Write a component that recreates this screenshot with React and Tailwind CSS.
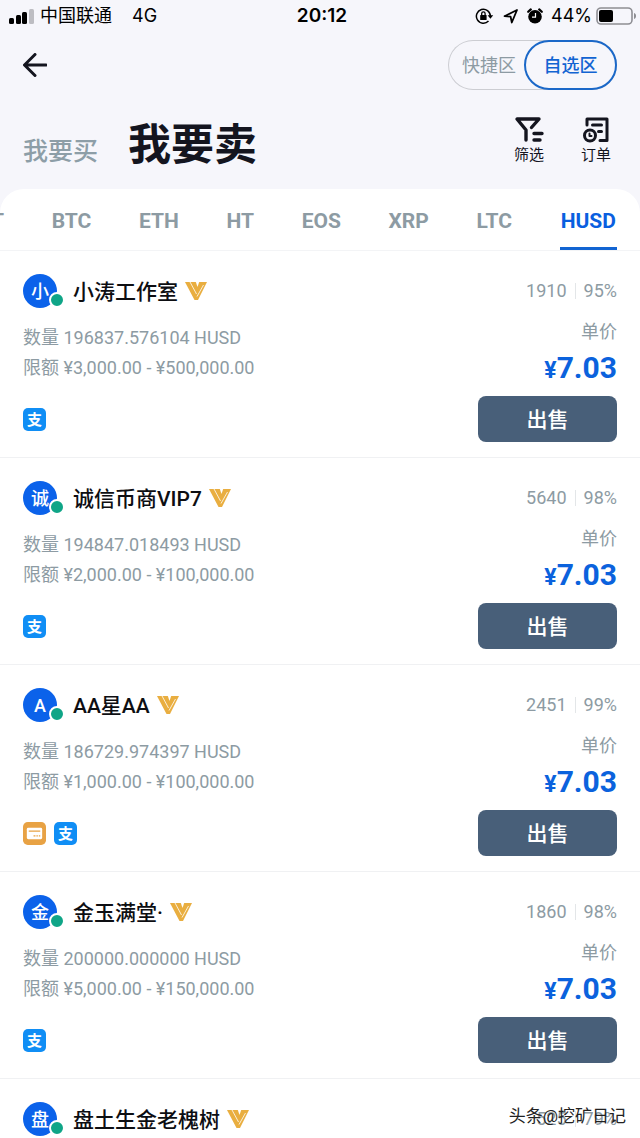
const FONT = "font-[Roboto,'Noto_Sans_CJK_SC',sans-serif]";

const coins = ["BTC", "ETH", "HT", "EOS", "XRP", "LTC", "HUSD"];

const offers = [
    { name: "小涛工作室", initial: "小", amount: "196837.576104", limit: "¥3,000.00 - ¥500,000.00", orders: "1910", rate: "95%", pay: ["alipay"] },
    { name: "诚信币商VIP7", initial: "诚", amount: "194847.018493", limit: "¥2,000.00 - ¥100,000.00", orders: "5640", rate: "98%", pay: ["alipay"] },
    { name: "AA星AA", initial: "A", amount: "186729.974397", limit: "¥1,000.00 - ¥100,000.00", orders: "2451", rate: "99%", pay: ["card", "alipay"] },
    { name: "金玉满堂·", initial: "金", amount: "200000.000000", limit: "¥5,000.00 - ¥150,000.00", orders: "1860", rate: "98%", pay: ["alipay"] },
    { name: "盘土生金老槐树", initial: "盘", orders: "525", rate: "79%" },
];

function StatusBar() {
    return (
        <div className="grid h-8 grid-cols-[1fr_auto_1fr] items-center pl-2 pr-1 text-black">
            <div className="flex items-center text-lg">
                <svg className="h-4 w-7" viewBox="0 0 28 16">
                    <rect x="1" y="10" width="5" height="6" rx="1.5" />
                    <rect x="8" y="7" width="5" height="9" rx="1.5" />
                    <rect x="14" y="4" width="5" height="12" rx="1.5" />
                    <rect x="21" y="1" width="5" height="15" rx="1.5" fill="#bdbdc2" />
                </svg>
                <span className="ml-1">中国联通</span>
                <span className="ml-5 font-[Inter,sans-serif]">4G</span>
            </div>
            <span className="font-[Inter,sans-serif] text-[19px] font-semibold">20:12</span>
            <div className="flex items-center justify-end">
                <svg className="h-4 w-5" viewBox="0 0 20 16" fill="none" stroke="black" strokeWidth="1.5">
                    <path d="M13.5 13A7 7 0 1 1 15.4 8" />
                    <path d="M12.6 7.2h5.6l-2.8 3.6z" fill="black" stroke="none" />
                    <rect x="5.2" y="7" width="6.4" height="5" rx=".6" fill="black" stroke="none" />
                    <path d="M6.7 7V5.6a1.7 1.7 0 0 1 3.4 0V7" strokeWidth="1.3" />
                </svg>
                <svg className="ml-2 size-4" viewBox="0 0 16 16" fill="none" stroke="black" strokeWidth="1.8" strokeLinejoin="round">
                    <path d="M14 2 1.5 8.2 7.6 8.6 8.8 14.5z" />
                </svg>
                <svg className="ml-2 size-4" viewBox="0 0 16 16">
                    <circle cx="8" cy="8.8" r="6.8" />
                    <path d="M1.2 3.8 3.8 1.4M12.2 1.4l2.6 2.4" stroke="black" strokeWidth="2.2" strokeLinecap="round" />
                    <path d="M8.5 5v4.2H5" fill="none" stroke="white" strokeWidth="1.2" />
                </svg>
                <span className="ml-2 font-[Inter,sans-serif] text-lg">44%</span>
                <svg className="ml-1 h-5 w-10" viewBox="0 0 40 20">
                    <rect x="1" y="2" width="35" height="16" rx="4" fill="none" stroke="#8e8e93" strokeWidth="1.6" />
                    <rect x="3" y="4" width="14" height="12" rx="2" />
                    <path d="M38 7v6c1.6-.6 2-1.8 2-3s-.4-2.4-2-3" fill="#8e8e93" />
                </svg>
            </div>
        </div>
    );
}

function Header() {
    return (
        <header className="px-[23px]">
            <div className="flex h-[66px] items-center justify-between">
                <button type="button" aria-label="返回">
                    <svg className="size-6" viewBox="0 0 24 24" fill="none" stroke="#14151f" strokeWidth="3" strokeLinecap="round" strokeLinejoin="round">
                        <path d="M23 12H2M12 1.5 1.5 12 12 22.5" />
                    </svg>
                </button>
                <div className="flex h-[50px] rounded-full bg-[#f6f6fb] text-lg ring-1 ring-inset ring-[#cccdd2]">
                    <button type="button" className="pt-0.5 pl-3.5 pr-2 text-[#8d9ba3]">快捷区</button>
                    <button type="button" className="w-[93px] rounded-full border-2 border-[#1b68c8] bg-[#f6f6fb] pt-0.5 font-medium text-[#1264d2]">自选区</button>
                </div>
            </div>
            <div className="flex h-[91px] items-start justify-between pt-[15px]">
                <div className="flex items-baseline gap-[30px]">
                    <button type="button" className="text-[25px] font-medium text-[#8d9ea7]">我要买</button>
                    <h1 className="text-[43px] leading-16 font-bold text-[#14151f]">我要卖</h1>
                </div>
                <div className="flex gap-9 pr-1.5 text-[15px] leading-5 text-[#14151f]">
                    <button type="button" className="flex flex-col items-center gap-0.5 pt-0.5">
                        <svg className="h-7 w-8" viewBox="0 0 32 28" fill="none" stroke="#14151f" strokeWidth="3.4" strokeLinecap="round" strokeLinejoin="round">
                            <path d="M13 25V15L4 4H26L18.5 12.5M21 18.5h8M21 25h6" />
                        </svg>
                        筛选
                    </button>
                    <button type="button" className="flex flex-col items-center gap-0.5 pt-0.5">
                        <svg className="h-7 w-7" viewBox="0 0 28 28" fill="none" stroke="#14151f" strokeWidth="3" strokeLinecap="round" strokeLinejoin="round">
                            <path d="M5 10V4H25V25.5H18M10.5 10h9M16.5 16.5h3" />
                            <circle cx="8" cy="20.5" r="5.5" />
                            <path d="M7.5 18.5V21H9.5" strokeWidth="2" />
                        </svg>
                        订单
                    </button>
                </div>
            </div>
        </header>
    );
}

function CoinTabs() {
    return (
        <nav className="flex h-[62px] justify-between overflow-hidden border-b border-[#f3f4f6] pr-[23px] text-[21px] font-bold text-[#8d9ba3]">
            <button type="button" className="-ml-14 w-15 pt-1 text-right">USDT</button>
            {coins.map((coin) => (
                <button
                    key={coin}
                    type="button"
                    className={coin === "HUSD" ? "border-b-3 border-[#1264d2] px-px pt-2 text-[#0a5fe0]" : "pt-1"}
                >
                    {coin}
                </button>
            ))}
        </nav>
    );
}

function VipMark() {
    return (
        <svg className="h-5 w-6" viewBox="0 0 24 20">
            <path d="M1 1H23L14 19H10.5Z" fill="#e9ae40" />
            <path d="M11.5 0H15.5L13.5 6Z" fill="white" />
            <path d="M5.5 0 12.5 13M19.5 4 13 15.5" stroke="white" strokeWidth=".8" />
        </svg>
    );
}

function PayIcon({ type }) {
    if (type === "card") {
        return (
            <svg className="size-[23px]" viewBox="0 0 24 24">
                <rect width="24" height="24" rx="5" fill="#e8a244" />
                <rect x="4" y="6" width="16" height="12" rx="1.5" fill="white" />
                <path d="M6 9.5h12M11 14.5h2M14 14.5h1.5M16.5 14.5H18" stroke="#e8a244" strokeWidth="1.5" />
            </svg>
        );
    }
    return (
        <span className="flex size-[23px] items-center justify-center rounded-[5px] bg-[#108ef5] pt-0.5 text-[15px] font-bold text-white">支</span>
    );
}

function Offer({ offer }) {
    return (
        <article className="flex h-[207px] justify-between border-b border-[#f0f1f3] px-[23px] pt-[22px]">
            <div className="text-lg text-[#8d9ba3]">
                <div className="flex h-9 items-center">
                    <div className="relative mr-4 flex size-[34px] items-center justify-center rounded-full bg-[#0b62ea] text-lg font-medium text-white">
                        <span className="pt-0.5">{offer.initial}</span>
                        <span className="absolute -right-2 bottom-0 size-4 rounded-full border-2 border-white bg-[#0fa587]" />
                    </div>
                    <h2 className="mr-1.5 pt-0.5 text-[21px] font-medium text-[#0d0e12]">{offer.name}</h2>
                    <VipMark />
                </div>
                {offer.amount && (
                    <>
                        <p className="mt-3.5 leading-[30px]">数量 {offer.amount} HUSD</p>
                        <p className="leading-[30px]">限额 {offer.limit}</p>
                        <div className="mt-[25px] flex gap-2">
                            {offer.pay.map((type) => (
                                <PayIcon key={type} type={type} />
                            ))}
                        </div>
                    </>
                )}
            </div>
            <div className="flex flex-col items-end text-lg text-[#8d9ba3]">
                <div className="flex h-9 items-center gap-2">
                    <span>{offer.orders}</span>
                    <span className="h-4 w-px bg-[#e3e6e8]" />
                    <span>{offer.rate}</span>
                </div>
                {offer.amount && (
                    <>
                        <span className="mt-2 leading-[30px]">单价</span>
                        <strong className="mt-px text-[30px] leading-10 font-bold text-[#0b62dd]">
                            <span className="text-[23px]">¥</span>7.03
                        </strong>
                        <button type="button" className="mt-[5px] h-[46px] w-[139px] rounded-lg bg-[#485f79] pt-0.5 text-[21px] font-medium text-white">出售</button>
                    </>
                )}
            </div>
        </article>
    );
}

export default function App() {
    return (
        <div className={`${FONT} relative flex h-screen flex-col overflow-hidden bg-[#f6f6fb]`} lang="zh-CN">
            <StatusBar />
            <Header />
            <main className="min-h-0 flex-1 overflow-hidden rounded-t-3xl bg-white">
                <CoinTabs />
                {offers.map((offer) => (
                    <Offer key={offer.name} offer={offer} />
                ))}
            </main>
            <span className="absolute right-3.5 bottom-2 text-[17px] leading-7 text-[#222]">头条@挖矿日记</span>
        </div>
    );
}
